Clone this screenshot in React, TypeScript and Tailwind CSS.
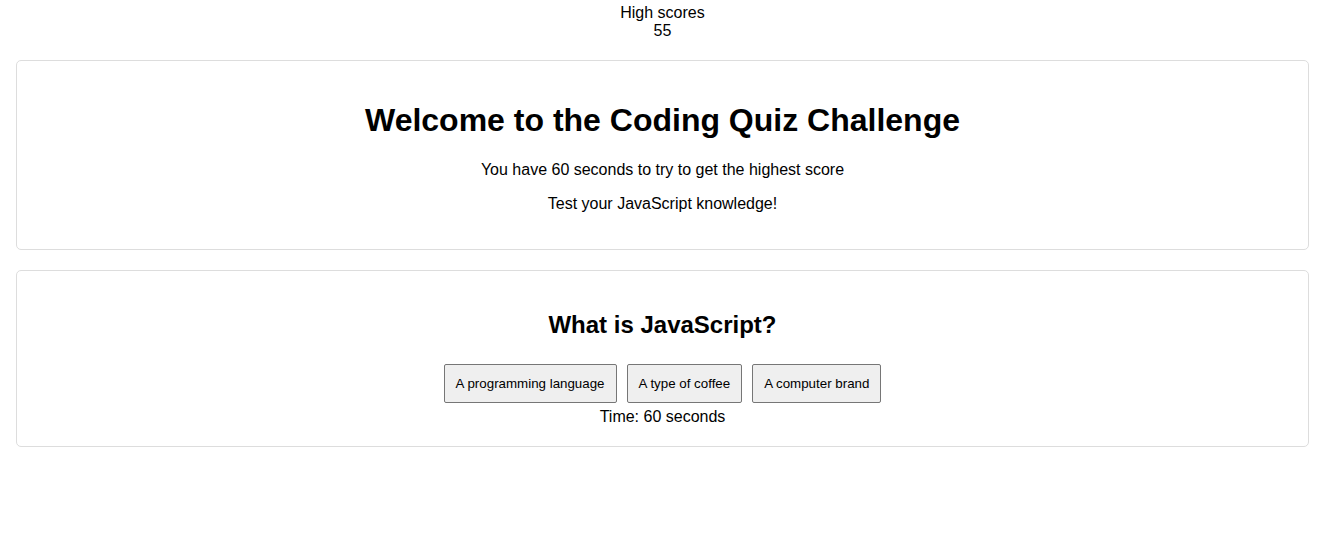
import React from "react";

const answers = ["A programming language", "A type of coffee", "A computer brand"];

export default function App() {
  return (
    <div className="min-h-[551px] bg-white text-black font-['Liberation_Sans',Arial,sans-serif]">
      {/* Header */}
      <header className="h-[40px] pt-[4px] text-center text-[16px] leading-[18.4px]">
        <div>High scores</div>
        <div>55</div>
      </header>

      {/* Intro card */}
      <section className="mx-4 mt-5 rounded-[5px] border border-[#dddddd] p-5 text-center">
        <h1 className="my-[21.44px] text-[32px] font-bold leading-[37px]">
          Welcome to the Coding Quiz Challenge
        </h1>
        <p className="mb-4 text-[16px] leading-[18.4px]">
          You have 60 seconds to try to get the highest score
        </p>
        <p className="mb-[15px] text-[16px] leading-[18.4px]">Test your JavaScript knowledge!</p>
      </section>

      {/* Question card */}
      <section className="mx-4 mt-5 rounded-[5px] border border-[#dddddd] px-5 pt-5 pb-[19px] text-center">
        <h2 className="mt-[20px] mb-[21px] text-[24px] font-bold leading-[27.6px]">
          What is JavaScript?
        </h2>
        <div className="flex justify-center">
          {answers.map((a) => (
            <button
              key={a}
              className="m-[5px] h-[39px] rounded-[2px] border border-[#767676] bg-[#efefef] px-[11px] text-[13.33px] leading-[15.3px] text-black"
            >
              {a}
            </button>
          ))}
        </div>
        <div className="text-[16px] leading-[18.4px]">Time: 60 seconds</div>
      </section>
    </div>
  );
}
